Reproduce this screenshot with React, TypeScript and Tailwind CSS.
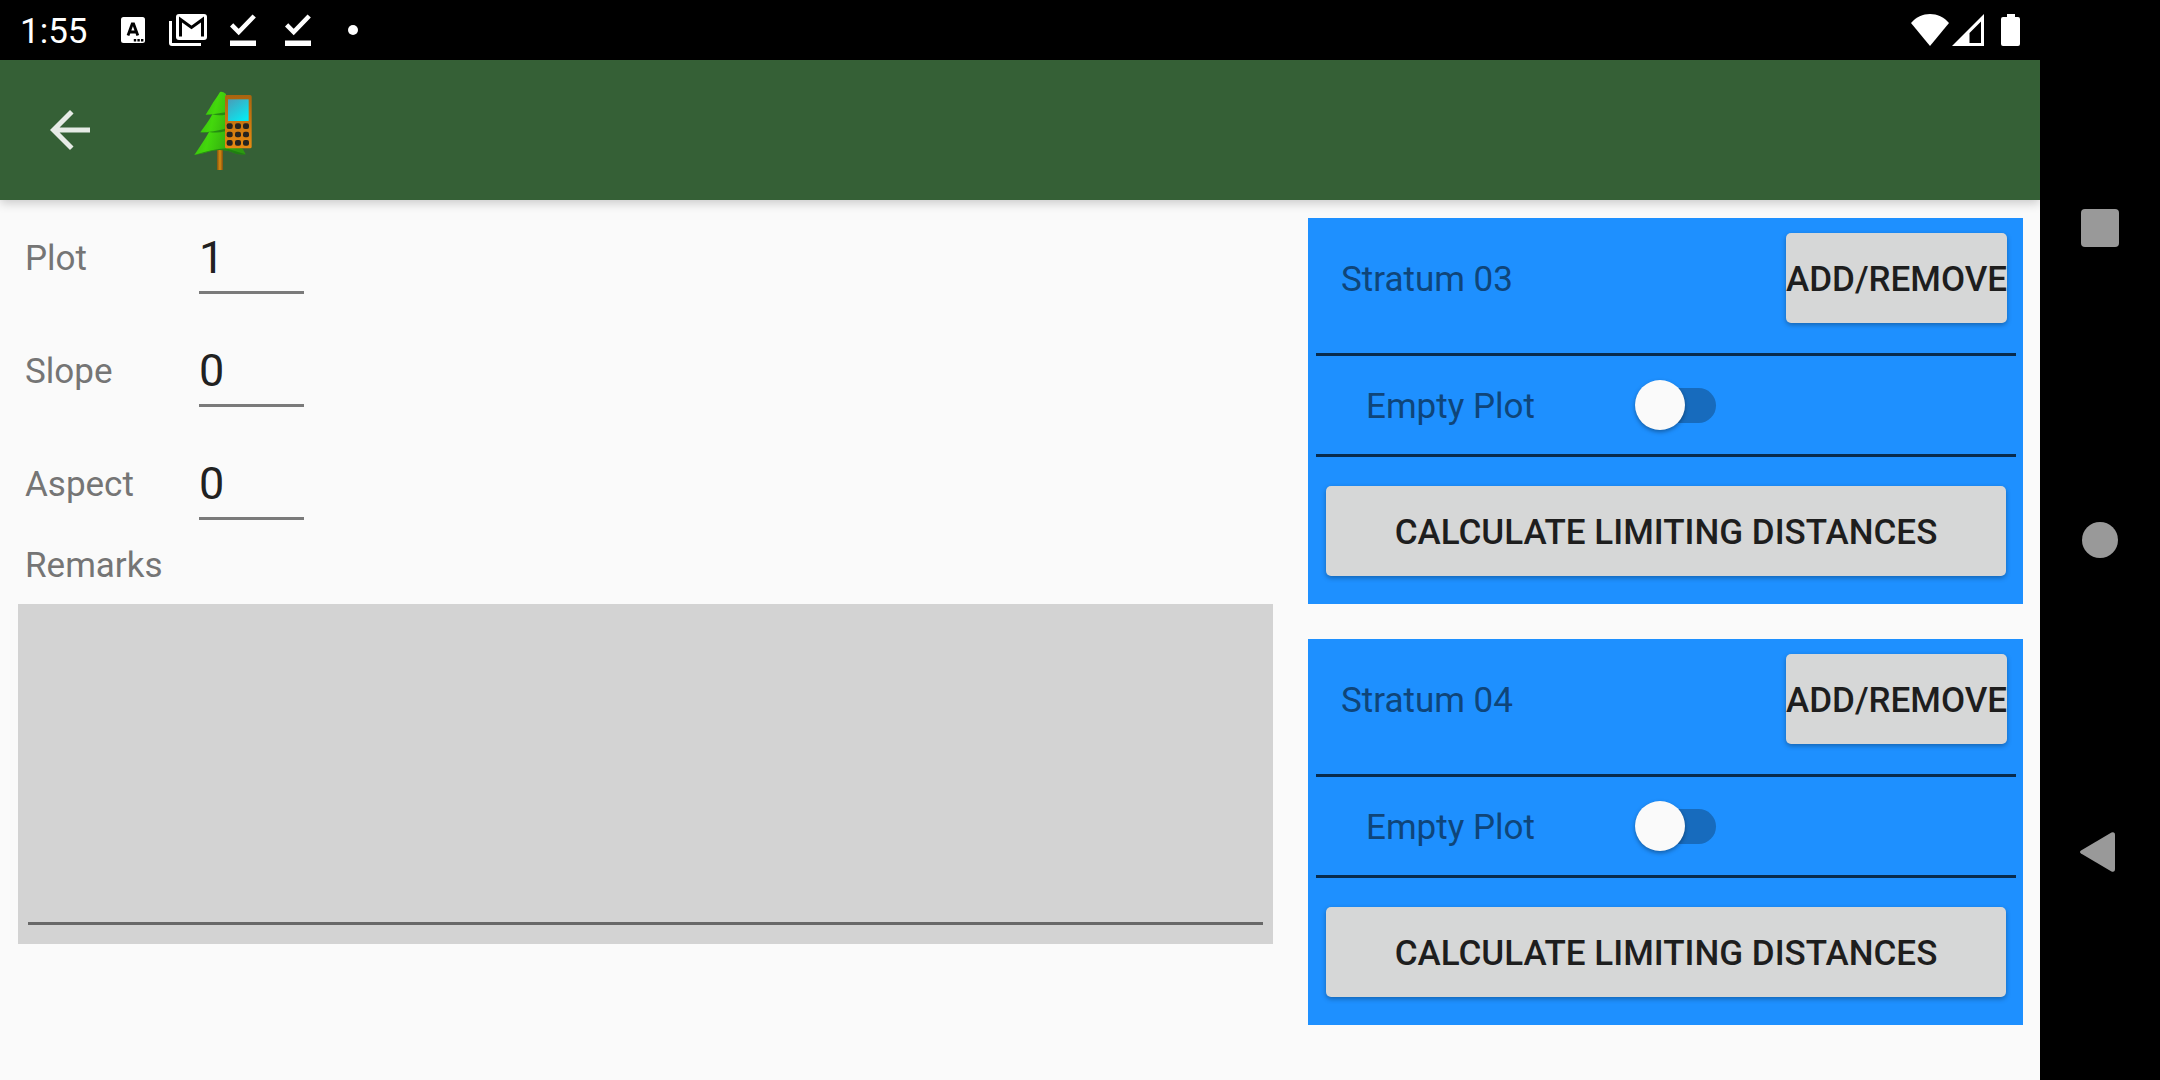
import { useState } from "react";

function StatusBar() {
  return (
    <div className="flex h-[60px] items-center justify-between bg-black text-white">
      <div className="flex items-center pl-5">
        <span className="w-[85px] pt-[3px] text-[35px] leading-10">1:55</span>
        <span className="flex w-[55px] justify-center">
          <svg width="24" height="26" viewBox="0 0 24 26" aria-hidden="true">
            <rect width="24" height="26" rx="2.5" fill="#fff" />
            <path d="M7 18.6L11.200 7h1.400l4.200 11.600M8.600 15h6.600" fill="none" stroke="#000" strokeWidth="2.8" />
            <path d="M12.800 22h2.400v2.400h-2.400zM16.400 22h2.400v2.400h-2.400zM20 22h2.400v2.400H20z" fill="#000" />
          </svg>
        </span>
        <span className="flex w-[55px] justify-center">
          <svg width="38" height="32" viewBox="0 0 38 32" aria-hidden="true">
            <path d="M0 7h3v22h29v3H3a3 3 0 0 1-3-3z" fill="#fff" />
            <rect x="7" y="0" width="31" height="26" rx="3" fill="#fff" />
            <path d="M11.500 22.500V5.500L22.500 13.500L33.500 5.500V22.500" fill="none" stroke="#000" strokeWidth="3" />
          </svg>
        </span>
        {[0, 1].map((i) => (
          <span key={i} className="flex w-[55px] justify-center">
            <svg width="26" height="32" viewBox="0 0 26 32" aria-hidden="true">
              <path d="M0 26.500h26V32H0z" fill="#fff" />
              <path d="M1.600 10.800L8.700 18L24.200 2" fill="none" stroke="#fff" strokeWidth="4.600" />
            </svg>
          </span>
        ))}
        <span className="flex w-[55px] justify-center">
          <span className="size-[10px] rounded-full bg-white" />
        </span>
      </div>
      <div className="flex items-center gap-[3px] pr-5">
        <svg width="38" height="32" viewBox="0 0 38 32" aria-hidden="true">
          <path d="M19 32L0 9C5 3 12 0 19 0s14 3 19 9z" fill="#fff" />
        </svg>
        <svg width="32" height="32" viewBox="0 0 32 32" aria-hidden="true">
          <path fillRule="evenodd" d="M32 0v32H0zM29 7.500L17.500 19v10H29z" fill="#fff" />
        </svg>
        <svg className="ml-[14px]" width="19" height="32" viewBox="0 0 19 32" aria-hidden="true">
          <path d="M6 0h8v3h3a2 2 0 0 1 2 2v25a2 2 0 0 1-2 2H2a2 2 0 0 1-2-2V5a2 2 0 0 1 2-2h4z" fill="#fff" />
        </svg>
      </div>
    </div>
  );
}

function TreeLogo() {
  return (
    <svg width="90" height="100" viewBox="0 0 270 300" role="img" aria-label="Tree and phone">
      <defs>
        <linearGradient id="leaf" x1="0" y1="0" x2="1" y2="0.3">
          <stop offset="0" stopColor="#2fae10" />
          <stop offset="0.45" stopColor="#43d80c" />
          <stop offset="1" stopColor="#2c9a10" />
        </linearGradient>
        <linearGradient id="trunk" x1="0" y1="0" x2="1" y2="0">
          <stop offset="0" stopColor="#80550f" />
          <stop offset="0.5" stopColor="#d98a10" />
          <stop offset="1" stopColor="#80500f" />
        </linearGradient>
        <linearGradient id="screen" x1="0" y1="0" x2="0.7" y2="1">
          <stop offset="0" stopColor="#4a9cb8" />
          <stop offset="1" stopColor="#08e8f0" />
        </linearGradient>
        <linearGradient id="body" x1="0" y1="0" x2="0" y2="1">
          <stop offset="0" stopColor="#a9640f" />
          <stop offset="1" stopColor="#e88a12" />
        </linearGradient>
      </defs>
      <rect x="111" y="205" width="18" height="65" fill="url(#trunk)" />
      <path
        d="M120 36C114 48 102 62 93 78C87 88 82 96 77 104Q88 106 97 103C88 120 74 140 61 157Q74 159 87 156C76 176 60 200 43 225Q72 220 96 212Q122 207 148 214Q172 226 197 223L188 206L138 196V42Q128 34 120 36Z"
        fill="url(#leaf)"
      />
      <path
        d="M77 104Q88 106 97 103Q116 108 136 104V97Q110 103 77 104ZM61 157Q74 159 87 156Q112 160 136 154V146Q104 155 61 157ZM43 225Q72 220 96 212Q122 207 148 214Q172 226 197 223Q168 214 144 206Q112 202 43 225Z"
        fill="#1a7312"
        opacity="0.7"
      />
      <rect x="135" y="45" width="80" height="160" rx="5" fill="url(#body)" />
      <rect x="144" y="58" width="62" height="65" fill="url(#screen)" />
      {[138, 163, 188].map((y) =>
        [149, 174, 198].map((x) => (
          <rect key={`${x}-${y}`} x={x - 9} y={y - 8} width="18" height="17" rx="6" fill="#262420" />
        )),
      )}
    </svg>
  );
}

function AppBar() {
  return (
    <header className="relative flex h-[140px] items-center gap-20 bg-[#356036] pl-10 shadow-[0_3px_10px_rgba(0,0,0,0.2)]">
      <button type="button" aria-label="Back" className="size-[60px]">
        <svg width="60" height="60" viewBox="0 0 24 24" fill="#e6ebe6" aria-hidden="true">
          <path d="M20 11H7.830l5.590-5.590L12 4l-8 8 8 8 1.410-1.410L7.830 13H20v-2z" />
        </svg>
      </button>
      <TreeLogo />
    </header>
  );
}

function Field({ id, label, initial }: { id: string; label: string; initial: string }) {
  const [value, setValue] = useState(initial);
  return (
    <div className="flex items-start pl-[7px]">
      <label htmlFor={id} className="w-[174px] pt-[21px] text-[35px] leading-10 text-[#757575]">
        {label}
      </label>
      <input
        id={id}
        value={value}
        inputMode="numeric"
        onChange={(e) => setValue(e.target.value)}
        className="h-[76px] w-[105px] border-b-[3px] border-[#7a7a7a] bg-transparent pt-[6px] text-[45px] text-[#212121] outline-none"
      />
    </div>
  );
}

const buttonClass =
  "h-[90px] rounded-[5px] bg-[#d6d7d7] pt-[3px] text-[35px] leading-10 font-medium whitespace-nowrap text-[#1e1e1e] shadow-[0_2px_5px_rgba(0,0,0,0.3)]";

function StratumCard({ code }: { code: string }) {
  const [empty, setEmpty] = useState(false);
  return (
    <section className="flex flex-col bg-[#1e90ff] pr-[7px] pb-7 pl-2">
      <div className="flex h-[135px] items-start justify-between pt-[15px] pr-[9px] pl-[25px]">
        <h2 className="pt-[27px] text-[35px] leading-10 text-[#0f4579]">Stratum {code}</h2>
        <button type="button" className={`${buttonClass} flex w-[221px] items-center justify-center`}>
          ADD/REMOVE
        </button>
      </div>
      <hr className="h-[3px] border-0 bg-[#082b4d]" />
      <div className="flex h-[98px] items-center pl-[50px]">
        <label htmlFor={`empty-${code}`} className="w-[269px] pt-[3px] text-[35px] leading-10 text-[#0f4579]">
          Empty Plot
        </label>
        <span className="relative flex h-[50px] w-[81px] items-center">
          <input
            id={`empty-${code}`}
            type="checkbox"
            role="switch"
            checked={empty}
            onChange={(e) => setEmpty(e.target.checked)}
            className="peer ml-[5px] h-[35px] w-[76px] appearance-none rounded-full bg-[#176bbd]"
          />
          <span className="pointer-events-none absolute left-0 size-[50px] rounded-full bg-[#fafafa] shadow-[0_2px_4px_rgba(0,0,0,0.35)] peer-checked:left-[31px]" />
        </span>
      </div>
      <hr className="h-[3px] border-0 bg-[#082b4d]" />
      <div className="flex px-[10px] pt-[29px]">
        <button type="button" className={`${buttonClass} flex-1`}>
          CALCULATE LIMITING DISTANCES
        </button>
      </div>
    </section>
  );
}

function NavBar() {
  return (
    <nav className="flex w-[120px] shrink-0 flex-col items-center justify-center gap-[252px] bg-black">
      <button type="button" aria-label="Recent apps" className="size-[60px]">
        <svg width="60" height="60" viewBox="0 0 60 60" fill="#999" aria-hidden="true">
          <rect x="11" y="11" width="38" height="38" rx="4" />
        </svg>
      </button>
      <button type="button" aria-label="Home" className="size-[60px]">
        <svg width="60" height="60" viewBox="0 0 60 60" fill="#999" aria-hidden="true">
          <circle cx="30" cy="30" r="18" />
        </svg>
      </button>
      <button type="button" aria-label="Back" className="size-[60px]">
        <svg width="60" height="60" viewBox="0 0 60 60" fill="#999" aria-hidden="true">
          <path d="M11 28.500L41.500 10.500Q45 9.500 45 13V47Q45 50.500 41.500 49.500L11 31.500Q9 30 11 28.500Z" />
        </svg>
      </button>
    </nav>
  );
}

export default function App() {
  const [remarks, setRemarks] = useState("");
  return (
    <div className="flex min-h-screen bg-[#fafafa] font-['Roboto',sans-serif]">
      <div className="flex min-w-0 flex-1 flex-col">
        <StatusBar />
        <AppBar />
        <main className="grid grid-cols-[1255fr_715fr] items-start gap-x-[35px] pt-[18px] pr-[17px] pl-[18px]">
          <form className="flex flex-col">
            <div className="flex flex-col gap-[37px]">
              <Field id="plot" label="Plot" initial="1" />
              <Field id="slope" label="Slope" initial="0" />
              <Field id="aspect" label="Aspect" initial="0" />
            </div>
            <label htmlFor="remarks" className="pt-[26px] pb-[18px] pl-[7px] text-[35px] leading-10 text-[#757575]">
              Remarks
            </label>
            <div className="flex h-[340px] bg-[#d3d3d3] px-[10px] pb-[19px]">
              <textarea
                id="remarks"
                value={remarks}
                onChange={(e) => setRemarks(e.target.value)}
                className="flex-1 resize-none border-b-[3px] border-[#686868] bg-transparent text-[45px] text-[#212121] outline-none"
              />
            </div>
          </form>
          <div className="flex flex-col gap-[35px]">
            <StratumCard code="03" />
            <StratumCard code="04" />
          </div>
        </main>
      </div>
      <NavBar />
    </div>
  );
}
